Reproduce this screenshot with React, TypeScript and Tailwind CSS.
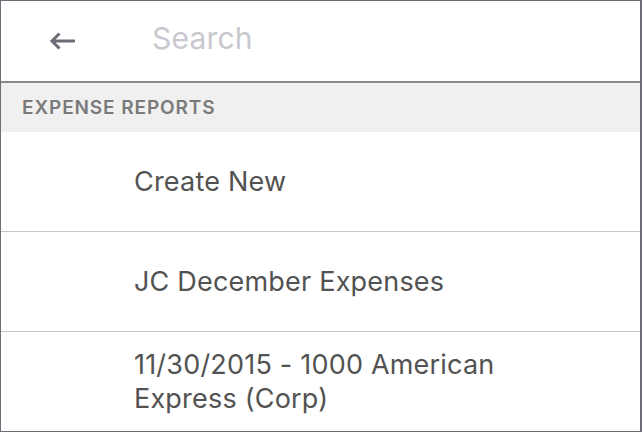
export default function App() {
  const rows = [
    "Create New",
    "JC December Expenses",
    "11/30/2015 - 1000 American Express (Corp)",
  ]

  return (
    <div
      className="w-[642px] h-[432px] overflow-hidden bg-white border border-[#6e6e78] border-r-2 flex flex-col"
      style={{ fontFamily: "Inter, 'Noto Sans', sans-serif" }}
    >
      <div className="h-[82px] shrink-0 flex items-center border-b-2 border-[#8a8a8a]">
        <div className="w-[151px] pl-[48px] shrink-0">
          <svg width="27" height="20" viewBox="0 0 27 20" fill="none">
            <path
              d="M26 10H3M10.5 2.5L3 10L10.5 17.5"
              stroke="#6d6d78"
              strokeWidth="3"
              strokeLinecap="butt"
              strokeLinejoin="miter"
            />
          </svg>
        </div>
        <div className="text-[30px] text-[#c8c8ce] pb-[6px] tracking-[0.2px]">Search</div>
      </div>
      <div className="h-[49px] shrink-0 bg-[#f0f0f0] flex items-center pl-[21px] pt-[1px] text-[19px] font-semibold tracking-[0.9px] text-[#7a7a7a]">
        EXPENSE REPORTS
      </div>
      {rows.map((r, i) => (
        <div
          key={r}
          className={
            "h-[100px] shrink-0 flex items-center pl-[133px] pr-[120px] text-[27px] leading-[34px] tracking-[0.2px] text-[#525252]" +
            (i < rows.length - 1 ? " border-b border-[#c8c7cc]" : "")
          }
        >
          {r}
        </div>
      ))}
    </div>
  )
}
